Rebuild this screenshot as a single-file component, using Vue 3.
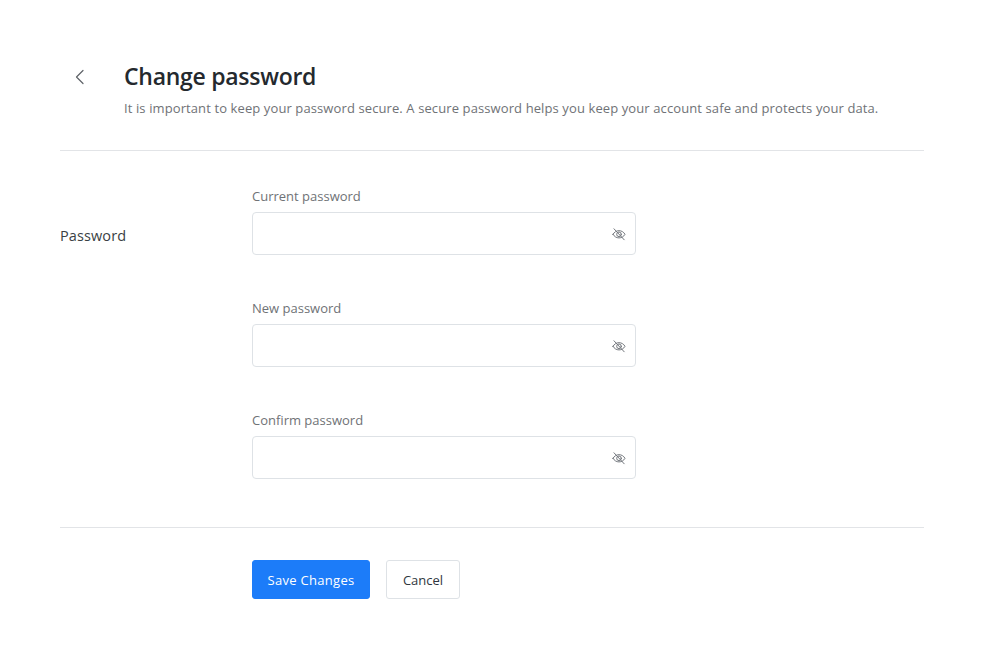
<script setup>
const fields = ['Current password', 'New password', 'Confirm password']
</script>

<template>
  <div class="page">
    <header class="head">
      <button class="back" aria-label="Back">
        <svg width="16" height="16" viewBox="0 0 16 16" fill="none"><path d="M11 1.5 4.5 8l6.5 6.5" stroke="#5f6368" stroke-width="1.2" stroke-linecap="round" stroke-linejoin="round"/></svg>
      </button>
      <div class="titles">
        <h1>Change password</h1>
        <p>It is important to keep your password secure. A secure password helps you keep your account safe and protects your data.</p>
      </div>
    </header>
    <section class="form">
      <div class="side">Password</div>
      <div class="fields">
        <div v-for="f in fields" :key="f" class="field">
          <label>{{ f }}</label>
          <div class="input">
            <svg width="16" height="16" viewBox="0 0 16 16" fill="none" stroke="#73777d" stroke-width="1" stroke-linecap="round" stroke-linejoin="round">
              <path d="M2 8.300C3.400 5.900 5.500 4.700 8 4.700s4.600 1.200 6 3.600C12.600 10.700 10.500 11.900 8 11.900S3.400 10.700 2 8.300Z"/>
              <circle cx="8" cy="8.300" r="2.300"/>
              <path d="M3 2.800 13.200 13.800"/>
            </svg>
          </div>
        </div>
      </div>
    </section>
    <footer class="actions">
      <button class="btn primary">Save Changes</button>
      <button class="btn ghost">Cancel</button>
    </footer>
  </div>
</template>

<style scoped>
.page {
  width: 989px;
  height: 650px;
  box-sizing: border-box;
  padding: 62px 65px 0 60px;
  background: #fff;
  font-family: "Open Sans", "Noto Sans", "Liberation Sans", sans-serif;
  overflow: hidden;
}
.head {
  display: flex;
  height: 89px;
  box-sizing: border-box;
  border-bottom: 1px solid #e2e4e7;
}
.back {
  width: 64px;
  height: 30px;
  margin: 0;
  padding: 0 0 0 12px;
  border: 0;
  background: none;
  text-align: left;
  display: flex;
  align-items: center;
}
h1 {
  margin: -1px 0 0;
  font-size: 23px;
  line-height: 30px;
  font-weight: 600;
  color: #24292e;
  letter-spacing: -0.27px;
}
p {
  margin: 7px 0 0;
  font-size: 13px;
  line-height: 20px;
  color: #6f7276;
  letter-spacing: 0.105px;
}
.form {
  display: flex;
  padding-top: 35px;
  height: 377px;
  box-sizing: border-box;
  border-bottom: 1px solid #e2e4e7;
}
.side {
  width: 192px;
  padding-top: 39px;
  font-size: 14.500px;
  line-height: 22px;
  color: #3a3f44;
  letter-spacing: 0.1px;
}
.fields {
  display: flex;
  flex-direction: column;
  gap: 43px;
}
.field label {
  display: block;
  height: 26px;
  font-size: 13px;
  line-height: 20px;
  color: #6f7276;
}
.input {
  width: 384px;
  height: 43px;
  box-sizing: border-box;
  border: 1px solid #dee2e6;
  border-radius: 4px;
  display: flex;
  align-items: center;
  justify-content: flex-end;
  padding-right: 8px;
}
.actions {
  display: flex;
  gap: 16px;
  padding: 32px 0 0 192px;
}
.btn {
  height: 39px;
  border-radius: 3px;
  font: inherit;
  font-size: 13px;
  padding: 0;
}
.primary {
  width: 118px;
  background: #1c7cf9;
  border: 1px solid #1c7cf9;
  color: #fff;
  letter-spacing: 0.3px;
}
.ghost {
  width: 74px;
  background: #fff;
  border: 1px solid #dee2e6;
  color: #2f3640;
}
</style>
